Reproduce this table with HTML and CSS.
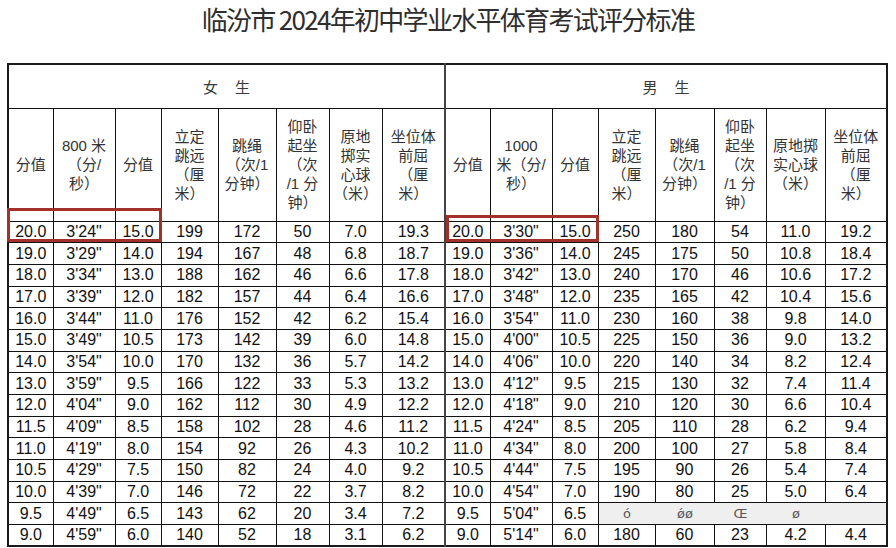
FILE: index.html
```html
<!DOCTYPE html>
<html lang="zh">
<head>
<meta charset="utf-8">
<title>临汾市 2024年初中学业水平体育考试评分标准</title>
<link rel="stylesheet" href="styles.css">
</head>
<body>
<div class="page">
  <div class="title"><h1>临汾市 2024年初中学业水平体育考试评分标准</h1></div>
  <table class="score">
    <colgroup>
      <col style="width:45px"><col style="width:62px"><col style="width:46px"><col style="width:57px"><col style="width:58px"><col style="width:53px"><col style="width:53px"><col style="width:63px">
      <col style="width:45px"><col style="width:62px"><col style="width:46px"><col style="width:57px"><col style="width:59px"><col style="width:52px"><col style="width:59px"><col style="width:62px">
    </colgroup>
    <tr class="group">
      <td colspan="8"><span class="gname">女生</span></td>
      <td colspan="8" class="mid"><span class="gname">男生</span></td>
    </tr>
    <tr class="head">
      <td>分值</td><td>800 米<br>（分/<br>秒）</td><td>分值</td><td>立定<br>跳远<br>（厘<br>米）</td><td>跳绳<br>（次/1<br>分钟）</td><td>仰卧<br>起坐<br>（次<br>/1 分<br>钟）</td><td>原地<br>掷实<br>心球<br>（米）</td><td>坐位体<br>前屈<br>（厘<br>米）</td>
      <td class="mid">分值</td><td>1000<br>米（分/<br>秒）</td><td>分值</td><td>立定<br>跳远<br>（厘<br>米）</td><td>跳绳<br>（次/1<br>分钟）</td><td>仰卧<br>起坐<br>（次<br>/1 分<br>钟）</td><td>原地掷<br>实心球<br>（米）</td><td>坐位体<br>前屈<br>（厘<br>米）</td>
    </tr>
    <tr class="data"><td>20.0</td><td>3'24"</td><td>15.0</td><td>199</td><td>172</td><td>50</td><td>7.0</td><td>19.3</td><td class="mid">20.0</td><td>3'30"</td><td>15.0</td><td>250</td><td>180</td><td>54</td><td>11.0</td><td>19.2</td></tr>
    <tr class="data"><td>19.0</td><td>3'29"</td><td>14.0</td><td>194</td><td>167</td><td>48</td><td>6.8</td><td>18.7</td><td class="mid">19.0</td><td>3'36"</td><td>14.0</td><td>245</td><td>175</td><td>50</td><td>10.8</td><td>18.4</td></tr>
    <tr class="data"><td>18.0</td><td>3'34"</td><td>13.0</td><td>188</td><td>162</td><td>46</td><td>6.6</td><td>17.8</td><td class="mid">18.0</td><td>3'42"</td><td>13.0</td><td>240</td><td>170</td><td>46</td><td>10.6</td><td>17.2</td></tr>
    <tr class="data"><td>17.0</td><td>3'39"</td><td>12.0</td><td>182</td><td>157</td><td>44</td><td>6.4</td><td>16.6</td><td class="mid">17.0</td><td>3'48"</td><td>12.0</td><td>235</td><td>165</td><td>42</td><td>10.4</td><td>15.6</td></tr>
    <tr class="data"><td>16.0</td><td>3'44"</td><td>11.0</td><td>176</td><td>152</td><td>42</td><td>6.2</td><td>15.4</td><td class="mid">16.0</td><td>3'54"</td><td>11.0</td><td>230</td><td>160</td><td>38</td><td>9.8</td><td>14.0</td></tr>
    <tr class="data"><td>15.0</td><td>3'49"</td><td>10.5</td><td>173</td><td>142</td><td>39</td><td>6.0</td><td>14.8</td><td class="mid">15.0</td><td>4'00"</td><td>10.5</td><td>225</td><td>150</td><td>36</td><td>9.0</td><td>13.2</td></tr>
    <tr class="data"><td>14.0</td><td>3'54"</td><td>10.0</td><td>170</td><td>132</td><td>36</td><td>5.7</td><td>14.2</td><td class="mid">14.0</td><td>4'06"</td><td>10.0</td><td>220</td><td>140</td><td>34</td><td>8.2</td><td>12.4</td></tr>
    <tr class="data"><td>13.0</td><td>3'59"</td><td>9.5</td><td>166</td><td>122</td><td>33</td><td>5.3</td><td>13.2</td><td class="mid">13.0</td><td>4'12"</td><td>9.5</td><td>215</td><td>130</td><td>32</td><td>7.4</td><td>11.4</td></tr>
    <tr class="data"><td>12.0</td><td>4'04"</td><td>9.0</td><td>162</td><td>112</td><td>30</td><td>4.9</td><td>12.2</td><td class="mid">12.0</td><td>4'18"</td><td>9.0</td><td>210</td><td>120</td><td>30</td><td>6.6</td><td>10.4</td></tr>
    <tr class="data"><td>11.5</td><td>4'09"</td><td>8.5</td><td>158</td><td>102</td><td>28</td><td>4.6</td><td>11.2</td><td class="mid">11.5</td><td>4'24"</td><td>8.5</td><td>205</td><td>110</td><td>28</td><td>6.2</td><td>9.4</td></tr>
    <tr class="data"><td>11.0</td><td>4'19"</td><td>8.0</td><td>154</td><td>92</td><td>26</td><td>4.3</td><td>10.2</td><td class="mid">11.0</td><td>4'34"</td><td>8.0</td><td>200</td><td>100</td><td>27</td><td>5.8</td><td>8.4</td></tr>
    <tr class="data"><td>10.5</td><td>4'29"</td><td>7.5</td><td>150</td><td>82</td><td>24</td><td>4.0</td><td>9.2</td><td class="mid">10.5</td><td>4'44"</td><td>7.5</td><td>195</td><td>90</td><td>26</td><td>5.4</td><td>7.4</td></tr>
    <tr class="data"><td>10.0</td><td>4'39"</td><td>7.0</td><td>146</td><td>72</td><td>22</td><td>3.7</td><td>8.2</td><td class="mid">10.0</td><td>4'54"</td><td>7.0</td><td>190</td><td>80</td><td>25</td><td>5.0</td><td>6.4</td></tr>
    <tr class="data"><td>9.5</td><td>4'49"</td><td>6.5</td><td>143</td><td>62</td><td>20</td><td>3.4</td><td>7.2</td><td class="mid">9.5</td><td>5'04"</td><td>6.5</td>
      <td colspan="5" class="smudge"><div class="smudge-row"><span>ó</span><span>ǿø</span><span>Œ</span><span>ø</span><span></span></div></td></tr>
    <tr class="data"><td>9.0</td><td>4'59"</td><td>6.0</td><td>140</td><td>52</td><td>18</td><td>3.1</td><td>6.2</td><td class="mid">9.0</td><td>5'14"</td><td>6.0</td><td>180</td><td>60</td><td>23</td><td>4.2</td><td>4.4</td></tr>
  </table>
  <div class="mark mark-girls"></div>
  <div class="mark mark-boys"></div>
</div>
</body>
</html>
```
FILE: styles.css
```css
html, body {
  margin: 0;
  padding: 0;
  background: #ffffff;
}

.page {
  position: relative;
  width: 896px;
  height: 548px;
  overflow: hidden;
  font-family: "Liberation Sans", "Noto Sans CJK SC", sans-serif;
}

.title {
  height: 63px;
  display: flex;
  justify-content: center;
  align-items: flex-start;
}

.title h1 {
  margin: 0;
  font-family: "Noto Sans CJK SC", sans-serif;
  font-weight: 400;
  font-size: 26px;
  line-height: 38px;
  letter-spacing: -1.7px;
  color: #2e2e2e;
  white-space: nowrap;
}

.score {
  margin-left: 7px;
  width: 879px;
  table-layout: fixed;
  border-collapse: collapse;
  border: 2px solid #1a1a1a;
}

.score td {
  border: 1px solid #111;
  padding: 0;
  text-align: center;
  vertical-align: middle;
}

.score td.mid {
  border-left: 2px solid #444;
}

.group {
  height: 44px;
}

.gname {
  font-family: "Noto Sans CJK SC", sans-serif;
  font-size: 15px;
  color: #3a3a3a;
  letter-spacing: 17px;
  padding-left: 17px;
}

.head {
  height: 113px;
}

.head td {
  font-size: 15px;
  line-height: 19px;
  color: #333;
}

.data {
  height: 21.7px;
}

.data td {
  font-size: 16px;
  line-height: 20px;
  color: #111;
}

.score td.smudge {
  background: #efefef;
  border-left-color: #999;
  border-right-color: #ccc;
}

.smudge-row {
  display: grid;
  grid-template-columns: 57px 59px 52px 59px 1fr;
  align-items: center;
  justify-items: center;
  font-family: "DejaVu Sans", sans-serif;
  font-size: 13px;
  color: #555;
}

.mark {
  position: absolute;
  box-sizing: border-box;
  border: 3px solid #a3302b;
}

.mark-girls {
  left: 7px;
  top: 208px;
  width: 155px;
  height: 34px;
}

.mark-boys {
  left: 446px;
  top: 215px;
  width: 153px;
  height: 27px;
}
```
